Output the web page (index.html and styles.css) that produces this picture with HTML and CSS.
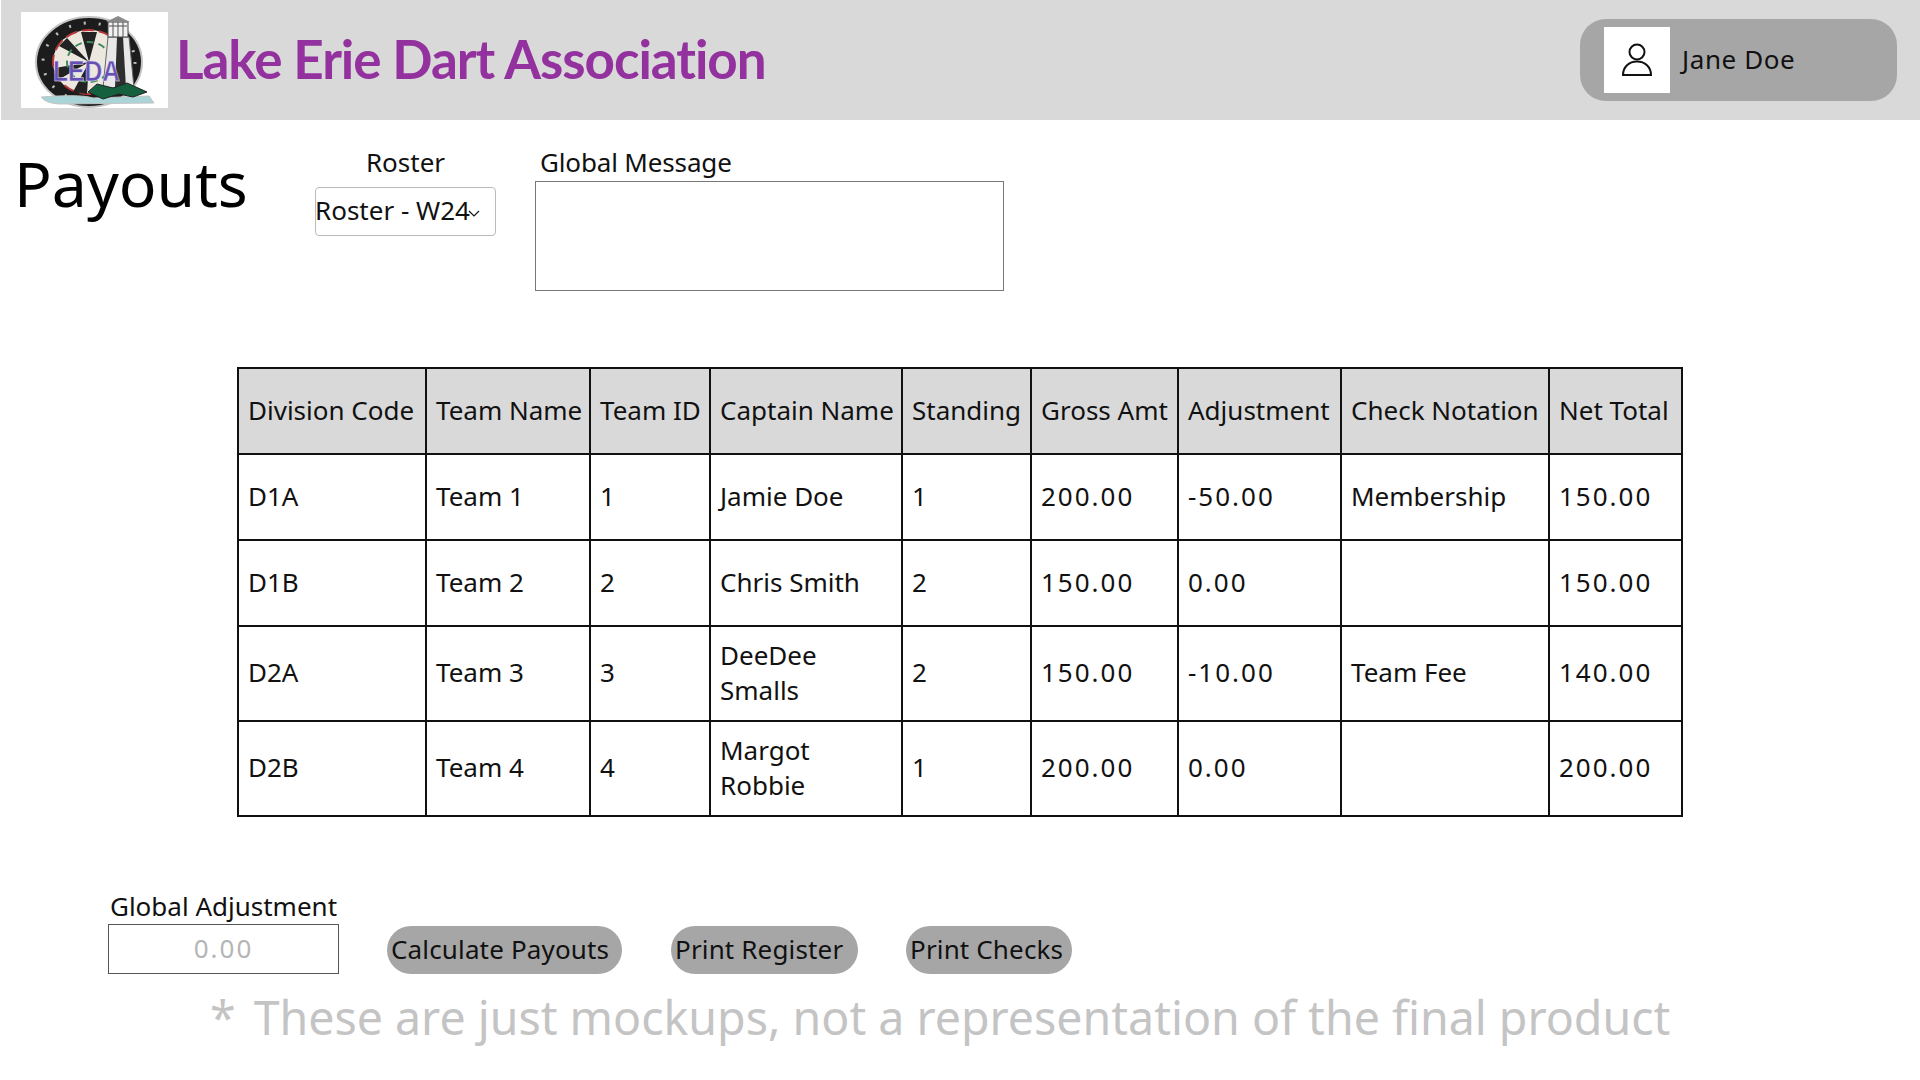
FILE: index.html
```html
<!DOCTYPE html>
<html lang="en">

<head>
  <meta charset="utf-8">
  <title>Payouts</title>
  <link rel="stylesheet" href="styles.css">
</head>

<body>
  <header class="header">
    <div class="logo">
      <svg width="147" height="96" viewBox="0 0 147 96">
        <!-- dartboard -->
        <ellipse cx="68" cy="50" rx="53" ry="45" fill="#1c1c1c" stroke="#c4c4c4" stroke-width="2"/>
        <ellipse cx="68" cy="50" rx="46" ry="39" fill="none" stroke="#bdbdbd" stroke-width="3" stroke-dasharray="2 13"/>
        <ellipse cx="68" cy="50" rx="36" ry="32" fill="#ece8df" stroke="#b8383a" stroke-width="2" stroke-dasharray="12 5"/>
        <path d="M68 50 L60 20 L76 20 Z M68 50 L38 34 L46 26 Z M68 50 L34 56 L37 68 Z M68 50 L52 80 L66 82 Z" fill="#222"/>
        <ellipse cx="68" cy="50" rx="22" ry="20" fill="none" stroke="#3c8a5a" stroke-width="2" stroke-dasharray="7 5"/>
        <!-- lighthouse -->
        <path d="M87 25 H108 L113 76 H82 Z" fill="#e8e8e8" stroke="#666"/>
        <path d="M96 25 H102 L105 76 H94 Z" fill="#2e2e2e"/>
        <rect x="87" y="10" width="20" height="15" fill="#f2f2f2" stroke="#444"/>
        <path d="M88 14 H106 M92 10 V25 M97 10 V25 M102 10 V25" stroke="#555" fill="none"/>
        <path d="M85 10 L97 4 L109 10 Z" fill="#8a8a8a"/>
        <!-- ground and water -->
        <path d="M20 85 Q60 82 72 86 L128 84 L133 91 L38 92 Q24 91 20 85 Z" fill="#a9d4d8" stroke="#c4c4c4"/>
        <path d="M67 80 L76 72 L92 76 L106 71 L126 80 L112 85 L98 82 L82 87 Z" fill="#15603f" stroke="#222"/>
        <text class="logo-text" x="32" y="69" textLength="67" lengthAdjust="spacingAndGlyphs">LEDA</text>
      </svg>
    </div>
    <h1 class="brand">Lake Erie Dart Association</h1>
    <div class="user">
      <div class="avatar">
        <svg width="30" height="34" viewBox="0 0 30 34" fill="none" stroke="#111" stroke-width="2">
          <circle cx="15" cy="9" r="7.5"/>
          <path d="M1 32 H29 C29 24 23 18.500 15 18.500 C7 18.500 1 24 1 32 Z"/>
        </svg>
      </div>
      <span class="user-name">Jane Doe</span>
    </div>
  </header>

  <section class="filters">
    <h2 class="page-title">Payouts</h2>
    <div class="roster">
      <label class="roster-label">Roster</label>
      <div class="select">
        <span>Roster - W24</span>
        <svg class="caret" width="12" height="7" viewBox="0 0 12 7" fill="none" stroke="#111" stroke-width="1.200">
          <path d="M1 1 L6 6 L11 1"/>
        </svg>
      </div>
    </div>
    <div class="message">
      <label class="message-label">Global Message</label>
      <div class="message-box"></div>
    </div>
  </section>

  <table class="payouts">
    <colgroup>
      <col class="c-div"><col class="c-name"><col class="c-id"><col class="c-capt"><col class="c-stand">
      <col class="c-gross"><col class="c-adj"><col class="c-check"><col class="c-net">
    </colgroup>
    <thead>
      <tr>
        <th>Division Code</th>
        <th>Team Name</th>
        <th>Team ID</th>
        <th>Captain Name</th>
        <th>Standing</th>
        <th>Gross Amt</th>
        <th>Adjustment</th>
        <th>Check Notation</th>
        <th>Net Total</th>
      </tr>
    </thead>
    <tbody>
      <tr class="row-short">
        <td>D1A</td><td>Team 1</td><td>1</td><td>Jamie Doe</td><td>1</td>
        <td class="amount">200.00</td><td class="amount">-50.00</td><td>Membership</td><td class="amount">150.00</td>
      </tr>
      <tr class="row-short">
        <td>D1B</td><td>Team 2</td><td>2</td><td>Chris Smith</td><td>2</td>
        <td class="amount">150.00</td><td class="amount">0.00</td><td></td><td class="amount">150.00</td>
      </tr>
      <tr class="row-tall">
        <td>D2A</td><td>Team 3</td><td>3</td><td>DeeDee Smalls</td><td>2</td>
        <td class="amount">150.00</td><td class="amount">-10.00</td><td>Team Fee</td><td class="amount">140.00</td>
      </tr>
      <tr class="row-tall">
        <td>D2B</td><td>Team 4</td><td>4</td><td>Margot Robbie</td><td>1</td>
        <td class="amount">200.00</td><td class="amount">0.00</td><td></td><td class="amount">200.00</td>
      </tr>
    </tbody>
  </table>

  <section class="actions">
    <div class="adjust">
      <label class="adjust-label">Global Adjustment</label>
      <div class="adjust-input">0.00</div>
    </div>
    <button class="btn btn-calc">Calculate Payouts</button>
    <button class="btn btn-register">Print Register</button>
    <button class="btn btn-checks">Print Checks</button>
  </section>

  <p class="note"><span class="note-star">*</span>These are just mockups, not a representation of the final product</p>
</body>

</html>
```

FILE: styles.css
```css
html, body {
  margin: 0;
  padding: 0;
}

body {
  width: 1920px;
  height: 1080px;
  overflow: hidden;
  background: #fff;
  color: #111;
  font-family: "Noto Sans", "Liberation Sans", sans-serif;
  font-size: 26px;
}

/* header */
.header {
  display: flex;
  align-items: center;
  height: 120px;
  margin-left: 1px;
  padding: 0 23px 0 20px;
  background: #d9d9d9;
}

.logo {
  display: flex;
  width: 147px;
  height: 96px;
  background: #fff;
}

.logo-text {
  font-family: "Liberation Sans", sans-serif;
  font-size: 29px;
  font-weight: 700;
  fill: #6450b4;
  stroke: #e8e4f4;
  stroke-width: 0.500px;
}

.brand {
  flex: 1;
  margin: 0 0 3px 8px;
  font-family: "Lato", sans-serif;
  font-size: 53px;
  font-weight: 700;
  letter-spacing: -1.050px;
  color: #93329e;
  white-space: nowrap;
}

.user {
  display: flex;
  align-items: center;
  width: 317px;
  height: 82px;
  padding-left: 24px;
  box-sizing: border-box;
  border-radius: 26px;
  background: #a6a6a6;
}

.avatar {
  display: flex;
  align-items: center;
  justify-content: center;
  width: 66px;
  height: 66px;
  background: #fff;
}

.user-name {
  margin: 0 0 3px 12px;
  letter-spacing: 0.600px;
}

/* filters */
.filters {
  display: flex;
  height: 247px;
}

.page-title {
  width: 301px;
  margin: 28px 0 0 14px;
  font-size: 62.500px;
  font-weight: 400;
  line-height: 70px;
  color: #000;
}

.roster {
  display: flex;
  flex-direction: column;
  align-items: center;
  width: 181px;
  margin-top: 27px;
}

.roster-label, .message-label, .adjust-label {
  line-height: 30px;
}

.select {
  display: flex;
  align-items: center;
  width: 100%;
  height: 49px;
  margin-top: 10px;
  box-sizing: border-box;
  border: 1px solid #bbb;
  border-radius: 4px;
  white-space: nowrap;
}

.select span {
  margin: -4px 0 0 -1px;
}

.caret {
  margin: 4px 0 0 -2px;
}

.message {
  width: 469px;
  margin: 27px 0 0 39px;
}

.message-label {
  display: block;
  margin-left: 5px;
  letter-spacing: -0.150px;
}

.message-box {
  height: 110px;
  margin-top: 4px;
  box-sizing: border-box;
  border: 1px solid #777;
}

/* table */
.payouts {
  width: 1444px;
  margin-left: 237px;
  border-collapse: collapse;
  table-layout: fixed;
  border: 2px solid #111;
}

.c-div { width: 188px; }
.c-name { width: 164px; }
.c-id { width: 120px; }
.c-capt { width: 192px; }
.c-stand { width: 129px; }
.c-gross { width: 147px; }
.c-adj { width: 163px; }
.c-check { width: 208px; }
.c-net { width: 133px; }

.payouts th, .payouts td {
  padding: 0 9px 2px;
  border: 2px solid #111;
  font-weight: 400;
  text-align: left;
  line-height: 35px;
}

.payouts th {
  height: 82px;
  background: #d9d9d9;
  white-space: nowrap;
}

.row-short td {
  height: 82px;
}

.row-tall td {
  height: 91px;
}

.payouts .amount {
  letter-spacing: 2px;
}

/* actions */
.actions {
  display: flex;
  align-items: flex-end;
  margin: 74px 0 0 108px;
}

.adjust {
  display: flex;
  flex-direction: column;
  align-items: center;
  width: 231px;
}

.adjust-label {
  white-space: nowrap;
}

.adjust-input {
  width: 100%;
  height: 50px;
  margin-top: 3px;
  box-sizing: border-box;
  border: 1px solid #555;
  color: #b5b5b5;
  text-align: center;
  line-height: 46px;
  letter-spacing: 2px;
}

.btn {
  height: 48px;
  padding: 0 0 2px 4px;
  border: none;
  border-radius: 24px;
  background: #a6a6a6;
  color: #111;
  font: inherit;
  letter-spacing: 0.150px;
  text-align: left;
  white-space: nowrap;
}

.btn-calc {
  width: 235px;
  margin-left: 48px;
}

.btn-register {
  width: 187px;
  margin-left: 49px;
}

.btn-checks {
  width: 166px;
  margin-left: 48px;
}

/* footnote */
.note {
  margin: 10px 0 0 210px;
  font-size: 46.500px;
  line-height: 66px;
  color: #c4c4c4;
  white-space: nowrap;
}

.note-star {
  margin-right: 18px;
}
```
